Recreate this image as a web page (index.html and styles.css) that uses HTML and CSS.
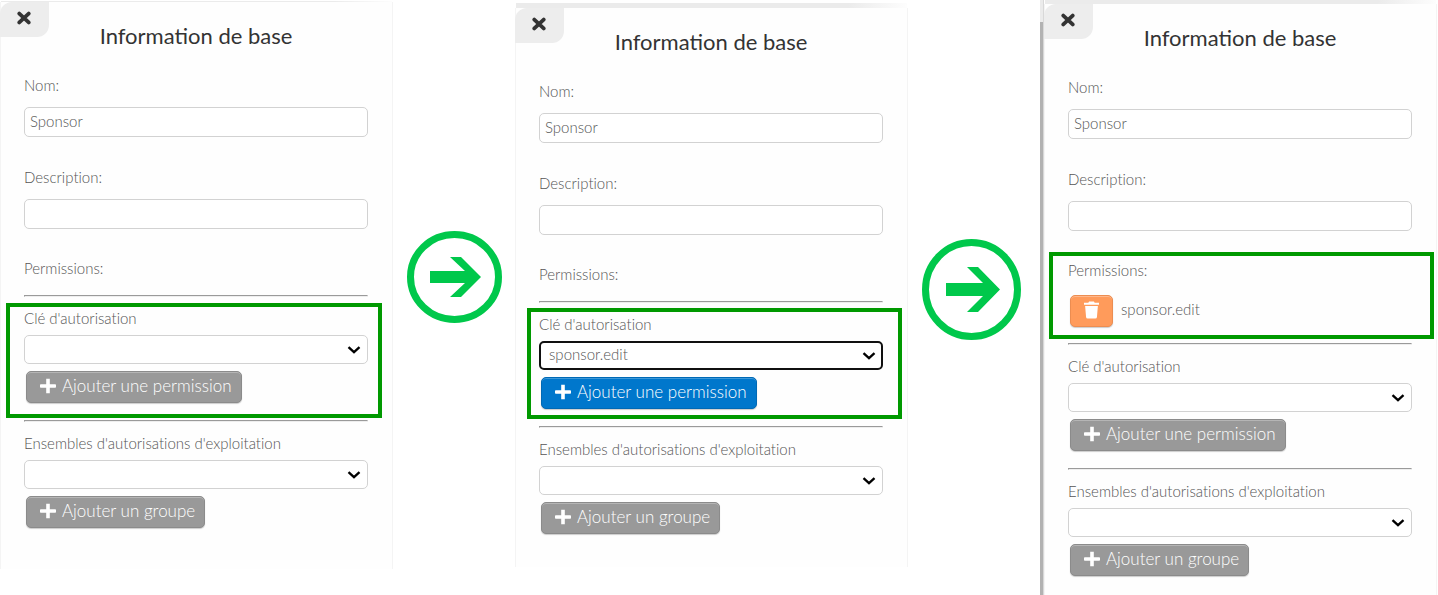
FILE: index.html
```
<!DOCTYPE html>
<html lang="fr">
<head>
<meta charset="utf-8">
<meta name="viewport" content="width=device-width, initial-scale=1">
<title>Information de base</title>
<link rel="stylesheet" href="styles.css">
</head>
<body>
<svg class="sprite" aria-hidden="true">
  <symbol id="close" viewBox="0 0 14 14"><path d="M2.300 2.600 11.700 11.400M11.700 2.600 2.300 11.400" stroke="currentColor" stroke-width="3.800" stroke-linecap="round"/></symbol>
  <symbol id="plus" viewBox="0 0 16 16"><path d="M6.2.8h3.6v5.4h5.4q.8 0 .8.8v2q0 .8-.8.8H9.8v5.4H6.2V9.8H.8Q0 9.8 0 9V7q0-.8.8-.8h5.4z" fill="currentColor"/></symbol>
  <symbol id="chevron" viewBox="0 0 14 8"><path d="M1.500 1.200 7 6.200l5.500-5" fill="none" stroke="currentColor" stroke-width="2.300"/></symbol>
  <symbol id="trash" viewBox="0 0 16 18"><path d="M0 1.200h4.600L5.400 0h5.200l.8 1.200H16v2.300H0zM1.200 4.700h13.600l-1 11.700q-.1 1.600-1.700 1.600H3.900q-1.600 0-1.700-1.600z" fill="currentColor"/></symbol>
</svg>
<main class="steps">
  <section class="panel panel-first">
    <button class="close" type="button" aria-label="Fermer"><svg><use href="#close"/></svg></button>
    <h2 class="title">Information de base</h2>
    <div class="field"><label for="nom1">Nom:</label><input id="nom1" type="text" value="Sponsor"></div>
    <div class="field"><label for="desc1">Description:</label><input id="desc1" type="text"></div>
    <div class="permissions"><p class="label">Permissions:</p></div>
    <hr>
    <div class="group marked marked-empty">
      <label for="cle1">Clé d'autorisation</label>
      <div class="select"><select id="cle1"><option></option></select><svg><use href="#chevron"/></svg></div>
      <button class="btn" type="button"><svg><use href="#plus"/></svg>Ajouter une permission</button>
    </div>
    <hr>
    <div class="group">
      <label for="ens1">Ensembles d'autorisations d'exploitation</label>
      <div class="select"><select id="ens1"><option></option></select><svg><use href="#chevron"/></svg></div>
      <button class="btn" type="button"><svg><use href="#plus"/></svg>Ajouter un groupe</button>
    </div>
  </section>

  <div class="arrow arrow-first">
    <svg width="95" height="92" viewBox="0 0 95 92" aria-hidden="true"><ellipse cx="47.500" cy="46" rx="44" ry="42.500"/><path d="M23 40H58L43 26H54L74 46 54 66H43L58 52H23z"/></svg>
  </div>

  <section class="panel panel-second">
    <button class="close" type="button" aria-label="Fermer"><svg><use href="#close"/></svg></button>
    <h2 class="title">Information de base</h2>
    <div class="field"><label for="nom2">Nom:</label><input id="nom2" type="text" value="Sponsor"></div>
    <div class="field"><label for="desc2">Description:</label><input id="desc2" type="text"></div>
    <div class="permissions"><p class="label">Permissions:</p></div>
    <hr>
    <div class="group marked marked-chosen">
      <label for="cle2">Clé d'autorisation</label>
      <div class="select select-active"><select id="cle2"><option>sponsor.edit</option></select><svg><use href="#chevron"/></svg></div>
      <button class="btn btn-primary" type="button"><svg><use href="#plus"/></svg>Ajouter une permission</button>
    </div>
    <hr>
    <div class="group">
      <label for="ens2">Ensembles d'autorisations d'exploitation</label>
      <div class="select"><select id="ens2"><option></option></select><svg><use href="#chevron"/></svg></div>
      <button class="btn" type="button"><svg><use href="#plus"/></svg>Ajouter un groupe</button>
    </div>
  </section>

  <div class="arrow arrow-second">
    <svg width="99" height="101" viewBox="0 0 99 101" aria-hidden="true"><ellipse cx="49.500" cy="50.500" rx="46" ry="47"/><path d="M24 44H61L45 28H56L78 50.500 56 73H45L61 57H24z"/></svg>
  </div>

  <div class="docked">
    <section class="panel panel-third">
      <button class="close" type="button" aria-label="Fermer"><svg><use href="#close"/></svg></button>
      <h2 class="title">Information de base</h2>
      <div class="field"><label for="nom3">Nom:</label><input id="nom3" type="text" value="Sponsor"></div>
      <div class="field"><label for="desc3">Description:</label><input id="desc3" type="text"></div>
      <div class="permissions marked marked-result">
        <p class="label">Permissions:</p>
        <div class="permission">
          <button class="btn btn-delete" type="button" aria-label="Supprimer sponsor.edit"><svg><use href="#trash"/></svg></button>
          <span>sponsor.edit</span>
        </div>
      </div>
      <hr>
      <div class="group">
        <label for="cle3">Clé d'autorisation</label>
        <div class="select"><select id="cle3"><option></option></select><svg><use href="#chevron"/></svg></div>
        <button class="btn" type="button"><svg><use href="#plus"/></svg>Ajouter une permission</button>
      </div>
      <hr>
      <div class="group">
        <label for="ens3">Ensembles d'autorisations d'exploitation</label>
        <div class="select"><select id="ens3"><option></option></select><svg><use href="#chevron"/></svg></div>
        <button class="btn" type="button"><svg><use href="#plus"/></svg>Ajouter un groupe</button>
      </div>
    </section>
  </div>
</main>
</body>
</html>
```
FILE: styles.css
```
*, ::before, ::after { box-sizing: border-box; }

body {
  margin: 0;
  background: #fff;
  color: #555;
  font: 300 15px/20px Lato, "Open Sans", sans-serif;
  font-variant-ligatures: none;
}

.sprite { display: none; }

.steps {
  display: grid;
  grid-template-columns: 393fr 122fr 393fr 132fr 398fr;
  align-items: start;
}

/* Panels */
.panel {
  position: relative;
  padding: 20px 24px 40px 23px;
  border: 1px solid #f4f4f4;
  border-width: 0 1px;
  background: #fefefe;
}

.panel::before {
  content: "";
  position: absolute;
  left: 0;
  right: 0;
  bottom: 100%;
  background: linear-gradient(to right, #ebebeb 85%, #fdfdfd);
}

.panel-first { margin-top: 2px; }
.panel-first::before { height: 1px; }
.panel-second { margin-top: 8px; padding-bottom: 32px; }
.panel-second::before { height: 5px; }
.panel-third { flex: 1; margin: 4px 1px 0 0; }
.panel-third::before { height: 4px; }

.docked {
  display: flex;
  min-height: 100vh;
}

.docked::before {
  content: "";
  width: 4px;
  background: linear-gradient(#ebebeb 22px, #b2b2b2 22px);
  border-right: 1px solid #d8d8d8;
}

.close {
  position: absolute;
  top: 0;
  left: -1px;
  display: grid;
  place-items: center;
  width: 49px;
  height: 35px;
  padding: 0 1px 3px 0;
  border: 0;
  border-radius: 12px 0;
  background: #ededed;
  color: #333;
}

.close svg { width: 14px; height: 14px; }

.title {
  margin: 0 0 25px;
  color: #333;
  font-size: 22px;
  font-weight: 400;
  line-height: 28px;
  text-align: center;
  font-variant-ligatures: normal;
}

/* Fields */
label, .label {
  display: block;
  margin: 0;
}

.field { margin-bottom: 30px; }
.field label { margin-bottom: 12px; }

.field input, .select select {
  display: block;
  width: 100%;
  border: 1px solid #d2d2d2;
  border-radius: 5px;
  background: #fff;
  color: inherit;
  font: inherit;
}

.field input {
  height: 30px;
  padding: 0 5px 3px;
}

.permissions { position: relative; margin-top: -1px; }
.permissions .label { padding-bottom: 1px; }

hr {
  height: 2px;
  margin: 16px 0 11px;
  border: 1px inset #eee;
}

.group { position: relative; padding-bottom: 1px; }

.select {
  position: relative;
  margin: 7px 0;
}

.select select {
  height: 29px;
  padding: 0 32px 3px 9px;
  appearance: none;
}

.select svg {
  position: absolute;
  top: 11px;
  right: 7px;
  width: 14px;
  height: 8px;
  color: #000;
  pointer-events: none;
}

.select-active select {
  padding-left: 8px;
  border: 2px solid #101010;
}

/* Buttons */
.btn {
  display: flex;
  align-items: center;
  gap: 6px;
  height: 32px;
  margin-left: 2px;
  padding: 0 9px 3px 13px;
  border: 1px solid #8b8b8b;
  border-radius: 5px;
  background: #999;
  box-shadow: inset 0 1px #b5b5b5, 0 1px 1px #ccc;
  color: #fff;
  font: inherit;
  font-size: 17px;
}

.btn svg { width: 16px; height: 16px; }

.btn-primary {
  border-color: #0069b5;
  background: #0077cc;
  box-shadow: inset 0 1px #3d98d8, 0 1px 1px #ccc;
}

.btn-delete {
  width: 43px;
  padding: 0 13px 2px;
  border-color: #ec8d51;
  background: #ff9b5b;
  box-shadow: inset 0 1px #ffb78b, 0 1px 1px #ccc;
}

.btn-delete svg { height: 18px; }

.permission {
  display: flex;
  align-items: center;
  gap: 8px;
  margin-top: 14px;
}

.permission span { padding-bottom: 4px; }

/* Highlight frames */
.marked::after {
  content: "";
  position: absolute;
  border: 4px solid #090;
  pointer-events: none;
}

.marked-empty::after { inset: -5px -14px -14px -18px; }
.marked-chosen::after { inset: -6px -19px -9px -12px; }
.marked-result::after { inset: -8px -22px -12px -19px; }

/* Arrows between steps */
.arrow { display: flex; justify-content: center; }
.arrow-first { padding-top: 231px; }
.arrow-second { padding: 239px 5px 0 0; }
.arrow ellipse { fill: none; stroke: #00c84b; stroke-width: 7; }
.arrow path { fill: #00c84b; }
```
